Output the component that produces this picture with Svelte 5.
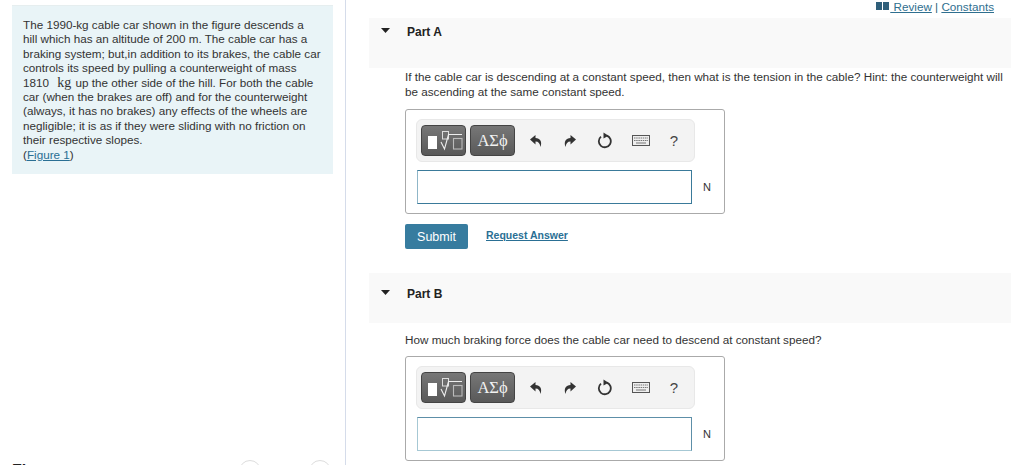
<script>
  const parts = [
    {
      name: 'Part A',
      question: 'If the cable car is descending at a constant speed, then what is the tension in the cable? Hint: the counterweight will be ascending at the same constant speed.',
      actions: true
    },
    {
      name: 'Part B',
      question: 'How much braking force does the cable car need to descend at constant speed?',
      actions: false
    }
  ]
</script>

<div class="page">
  <aside class="left">
    <div class="intro">
      The 1990-kg cable car shown in the figure descends a hill&nbsp;which has an altitude of 200 m. The cable car has a braking system; but,in addition to its brakes, the cable car controls its speed by pulling a counterweight of mass 1810 <span class="unit">kg</span> up the other side of the hill. For both the cable car (when the brakes are off) and for the counterweight (always, it has no brakes) any effects of the wheels are negligible; it is as if they were sliding with no friction on their respective slopes.<br />
      (<a href="#figure">Figure 1</a>)
    </div>
    <div class="figure-head">
      <h2>Figure</h2>
      <div class="pager">
        <span class="round"></span>
        <span class="round"></span>
      </div>
    </div>
  </aside>

  <main class="right">
    <div class="links">
      <svg class="book" width="13" height="8" viewBox="0 0 13 8"><path d="M0 0h6v8H0zM7 0h6v8H7z" fill="#2f5f7a" /></svg>
      <a href="#review">&nbsp;Review</a> | <a href="#constants">Constants</a>
    </div>

    {#each parts as part}
      <section class="part">
        <div class="part-bar">
          <svg class="caret" width="9" height="5" viewBox="0 0 9 5"><path d="M0 0h9L4.500 5z" fill="#222" /></svg>
          <h3>{part.name}</h3>
        </div>
        <p class="question">{part.question}</p>
        <div class="answer">
          <div class="toolbar">
            <button class="tool" aria-label="Templates">
              <svg width="43" height="29" viewBox="0 0 43 29">
                <rect x="6" y="10" width="9" height="13" fill="#fff" />
                <rect x="20.500" y="5.500" width="6" height="7.500" fill="none" stroke="#ddd" />
                <path d="M19 16l3.500 7L26.500 8.500h13.500" fill="none" stroke="#eee" stroke-width="1.100" />
                <rect x="31.500" y="12.500" width="8.500" height="10.500" fill="none" stroke="#bbb" stroke-width="1.100" />
              </svg>
            </button>
            <button class="tool greek">ΑΣϕ</button>
            <div class="icons">
              <svg width="14" height="14" viewBox="0 0 14 14"><path d="M1 5.500L6.500 1v3C11 4 13.500 7.500 11.500 13 11 9.500 9.500 7.500 6.500 7.500V10.500z" fill="#333" /></svg>
              <svg width="14" height="14" viewBox="0 0 14 14"><path d="M13 5.500L7.500 1v3C3 4 .500 7.500 2.500 13 3 9.500 4.500 7.500 7.500 7.500V10.500z" fill="#333" /></svg>
              <svg width="16" height="17" viewBox="-1 0 16 17"><path d="M9.800 3.600A6 6 0 1 1 4 4.600" fill="none" stroke="#333" stroke-width="1.800" /><path d="M6.500 0.500L11.500 3.700L6.500 6.500z" fill="#333" /></svg>
              <svg width="18" height="11" viewBox="0 0 18 11"><rect x="0.500" y="0.500" width="17" height="10" fill="#eee" stroke="#555" /><path d="M2 3h14M2 5.500h14" stroke="#777" stroke-dasharray="1.500 .7" /><path d="M4 8h10" stroke="#777" /></svg>
              <span class="help">?</span>
            </div>
          </div>
          <div class="input-row">
            <input type="text" aria-label="Answer" />
            <span class="unit-n">N</span>
          </div>
        </div>
        {#if part.actions}
          <div class="actions">
            <button class="submit">Submit</button>
            <a class="request" href="#request">Request Answer</a>
          </div>
        {/if}
      </section>
    {/each}
  </main>
</div>

<style>
  :global(body) {
    margin: 0;
    overflow: hidden;
    background: #fff;
  }

  .page {
    display: flex;
    height: 465px;
    overflow: hidden;
    font-family: "Liberation Sans", Arial, sans-serif;
    font-size: 11.7px;
    color: #333;
  }

  a {
    color: #2a6f94;
  }

  .left {
    box-sizing: border-box;
    width: 346px;
    height: 465px;
    flex-shrink: 0;
    padding: 5px 12px 0;
    border-right: 1px solid #d5dcea;
    overflow: hidden;
  }

  .intro {
    box-sizing: border-box;
    width: 321px;
    height: 169px;
    padding: 12px 11px 0;
    background: #e9f4f7;
    border-top: 1px solid #e6eeef;
    line-height: 14.4px;
  }

  .unit {
    margin: 0 1px 0 5px;
    font-family: "Liberation Serif", serif;
    font-size: 14px;
    line-height: 0;
  }

  .figure-head {
    display: flex;
    justify-content: space-between;
    margin-top: 286px;
  }

  .figure-head h2 {
    margin: 3px 0 0;
    font-size: 16px;
    line-height: 16px;
    color: #222;
  }

  .pager {
    display: flex;
    gap: 48px;
    padding-right: 2px;
  }

  .round {
    box-sizing: border-box;
    width: 22px;
    height: 22px;
    border: 1px solid #ddd;
    border-radius: 50%;
  }

  .right {
    flex: 1;
    padding: 0 13px 0 23px;
  }

  .links {
    display: flex;
    align-items: center;
    justify-content: flex-end;
    white-space: pre;
    height: 12px;
    padding-right: 17px;
    line-height: 13px;
    color: #2f5f7a;
  }

  .links a {
    color: #2f6f8f;
  }

  .book {
    margin-right: 1px;
  }

  .part-bar {
    box-sizing: border-box;
    display: flex;
    align-items: flex-start;
    height: 50px;
    margin-top: 6px;
    padding-top: 1px;
    background: #f9f9f9;
  }

  .part + .part .part-bar {
    margin-top: 24px;
    padding-top: 8px;
  }

  .caret {
    margin: 9px 0 0 12px;
  }

  .part-bar h3 {
    margin: 6px 0 0 17px;
    font-size: 12px;
    line-height: 14px;
    color: #222;
  }

  .question {
    margin: 0;
    padding: 1px 0 1px 36px;
    line-height: 15px;
  }

  .part + .part .question {
    padding: 9px 0 0 36px;
  }

  .answer {
    box-sizing: border-box;
    width: 320px;
    margin: 9px 0 0 36px;
    padding: 9px 10px;
    border: 1px solid #aaa;
    border-radius: 3px;
  }

  .toolbar {
    box-sizing: border-box;
    display: flex;
    align-items: center;
    gap: 4px;
    width: 279px;
    height: 43px;
    padding: 0 4px;
    background: #f3f3f3;
    border: 1px solid #e8e8e8;
    border-radius: 6px;
  }

  .tool {
    box-sizing: border-box;
    display: flex;
    align-items: center;
    justify-content: center;
    width: 45px;
    height: 31px;
    padding: 0;
    background: linear-gradient(#777, #595959);
    border: 1px solid #444;
    border-radius: 4px;
    color: #f2f2f2;
  }

  .greek {
    font-family: "Liberation Serif", serif;
    font-size: 16.500px;
  }

  .icons {
    display: flex;
    align-items: center;
    justify-content: space-between;
    flex: 1;
    padding: 0 12px 0 10px;
  }

  .help {
    font-size: 15px;
    color: #444;
  }

  .input-row {
    display: flex;
    align-items: center;
    margin: 8px 0 0 1px;
  }

  .input-row input {
    box-sizing: border-box;
    width: 275px;
    height: 34px;
    padding: 0;
    background: #fff;
    border: 1px solid #3a7a9a;
    border-left-color: #8fb6c8;
  }

  .part + .part input {
    border-color: #5d8fa8 #5d8fa8 #a6c8d4 #a6c8d4;
  }

  .unit-n {
    margin-left: 11px;
    font-size: 11px;
  }

  .actions {
    display: flex;
    align-items: flex-start;
    gap: 18px;
    margin: 10px 0 0 36px;
  }

  .submit {
    width: 63px;
    height: 25px;
    padding: 0;
    background: #377c9f;
    border: none;
    border-radius: 2px;
    color: #fff;
    font-family: inherit;
    font-size: 12.500px;
  }

  .request {
    margin-top: 5px;
    font-size: 10.500px;
    font-weight: bold;
  }
</style>
